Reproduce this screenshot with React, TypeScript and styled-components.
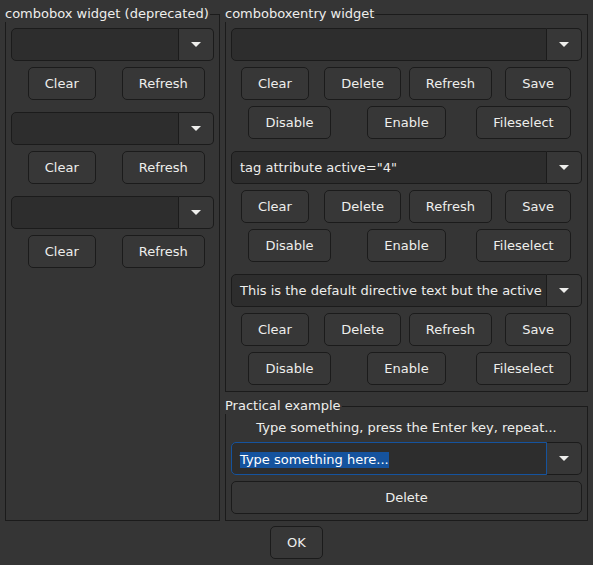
import styled, { createGlobalStyle } from 'styled-components';

const GlobalStyle = createGlobalStyle`
  html, body {
    margin: 0;
    padding: 0;
    background: #353535;
  }
  body {
    font-family: "DejaVu Sans", "Noto Sans", sans-serif;
    font-size: 13px;
    color: #eeeeec;
  }
  * {
    box-sizing: border-box;
  }
`;

const Window = styled.div`
  width: 593px;
  height: 565px;
  padding: 6px 5px 6px 5px;
  display: flex;
  flex-direction: column;
  gap: 5px;
`;

const Columns = styled.div`
  flex: 1;
  display: flex;
  gap: 5px;
  min-height: 0;
`;

const Column = styled.div`
  display: flex;
  flex-direction: column;
  gap: 6px;
`;

const Frame = styled.fieldset<{ $width: number; $grow?: boolean }>`
  margin: 0;
  padding: 0;
  min-width: 0;
  width: ${(p) => p.$width}px;
  border: 1px solid #1b1b1b;
  ${(p) => p.$grow && 'flex: 1;'}
`;

const Label = styled.legend`
  padding: 0 1px 0 0;
  margin: 0 0 0 -1px;
  line-height: 16px;
  height: 16px;
`;

const Body = styled.div<{ $blockGap: number }>`
  padding: 6px 5px 6px 5px;
  display: flex;
  flex-direction: column;
  gap: ${(p) => p.$blockGap}px;
`;

const Block = styled.div`
  display: flex;
  flex-direction: column;
  gap: 6px;
`;

const ButtonRow = styled.div<{ $cols: number }>`
  display: grid;
  grid-template-columns: repeat(${(p) => p.$cols}, 1fr);
  justify-items: center;
`;

const Button = styled.button<{ $wide?: boolean }>`
  height: 33px;
  padding: 0 16px;
  ${(p) => p.$wide && 'width: 100%;'}
  font: inherit;
  color: #eeeeec;
  background: #373737;
  border: 1px solid #1b1b1b;
  border-radius: 5px;
  line-height: 31px;
  white-space: nowrap;
`;

const Combo = styled.div`
  display: flex;
  height: 33px;
  width: 100%;
`;

const Field = styled.div<{ $focused?: boolean }>`
  flex: 1;
  min-width: 0;
  background: #2d2d2d;
  border: 1px solid ${(p) => (p.$focused ? '#15539e' : '#1b1b1b')};
  border-radius: 5px 0 0 5px;
  padding: 0 8px;
  line-height: 31px;
  white-space: nowrap;
  overflow: hidden;
`;

const Selected = styled.span`
  background: #15539e;
  color: #ffffff;
  display: inline-block;
  line-height: 16px;
  vertical-align: middle;
`;

const Arrow = styled.div<{ $width: number }>`
  width: ${(p) => p.$width}px;
  flex: none;
  background: #373737;
  border: 1px solid #1b1b1b;
  border-left: none;
  border-radius: 0 5px 5px 0;
  display: flex;
  align-items: center;
  justify-content: center;
`;

const Hint = styled.div`
  text-align: center;
  line-height: 16px;
`;

const Footer = styled.div`
  display: flex;
  justify-content: center;
`;

function DropArrow() {
  return (
    <svg width="10" height="5" viewBox="0 0 10 5">
      <path d="M0 0 L10 0 L5 5 Z" fill="#eeeeec" />
    </svg>
  );
}

function ComboBox({ text, arrow = 35, focused }: { text?: string; arrow?: number; focused?: boolean }) {
  return (
    <Combo>
      <Field $focused={focused}>{focused && text ? <Selected>{text}</Selected> : text}</Field>
      <Arrow $width={arrow}>
        <DropArrow />
      </Arrow>
    </Combo>
  );
}

function OldBlock() {
  return (
    <Block>
      <ComboBox arrow={35} />
      <ButtonRow $cols={2}>
        <Button>Clear</Button>
        <Button>Refresh</Button>
      </ButtonRow>
    </Block>
  );
}

function EntryBlock({ text }: { text?: string }) {
  return (
    <Block>
      <ComboBox text={text} />
      <ButtonRow $cols={4}>
        <Button>Clear</Button>
        <Button>Delete</Button>
        <Button>Refresh</Button>
        <Button>Save</Button>
      </ButtonRow>
      <ButtonRow $cols={3}>
        <Button>Disable</Button>
        <Button>Enable</Button>
        <Button>Fileselect</Button>
      </ButtonRow>
    </Block>
  );
}

export default function App() {
  return (
    <>
      <GlobalStyle />
      <Window>
        <Columns>
          <Frame $width={215}>
            <Label>combobox widget (deprecated)</Label>
            <Body $blockGap={12}>
              <OldBlock />
              <OldBlock />
              <OldBlock />
            </Body>
          </Frame>
          <Column>
            <Frame $width={363}>
              <Label>comboboxentry widget</Label>
              <Body $blockGap={12}>
                <EntryBlock />
                <EntryBlock text={'tag attribute active="4"'} />
                <EntryBlock text="This is the default directive text but the active" />
              </Body>
            </Frame>
            <Frame $width={363} $grow>
              <Label>Practical example</Label>
              <Body $blockGap={6}>
                <Hint>Type something, press the Enter key, repeat...</Hint>
                <ComboBox text="Type something here..." focused />
                <Button $wide>Delete</Button>
              </Body>
            </Frame>
          </Column>
        </Columns>
        <Footer>
          <Button>OK</Button>
        </Footer>
      </Window>
    </>
  );
}
